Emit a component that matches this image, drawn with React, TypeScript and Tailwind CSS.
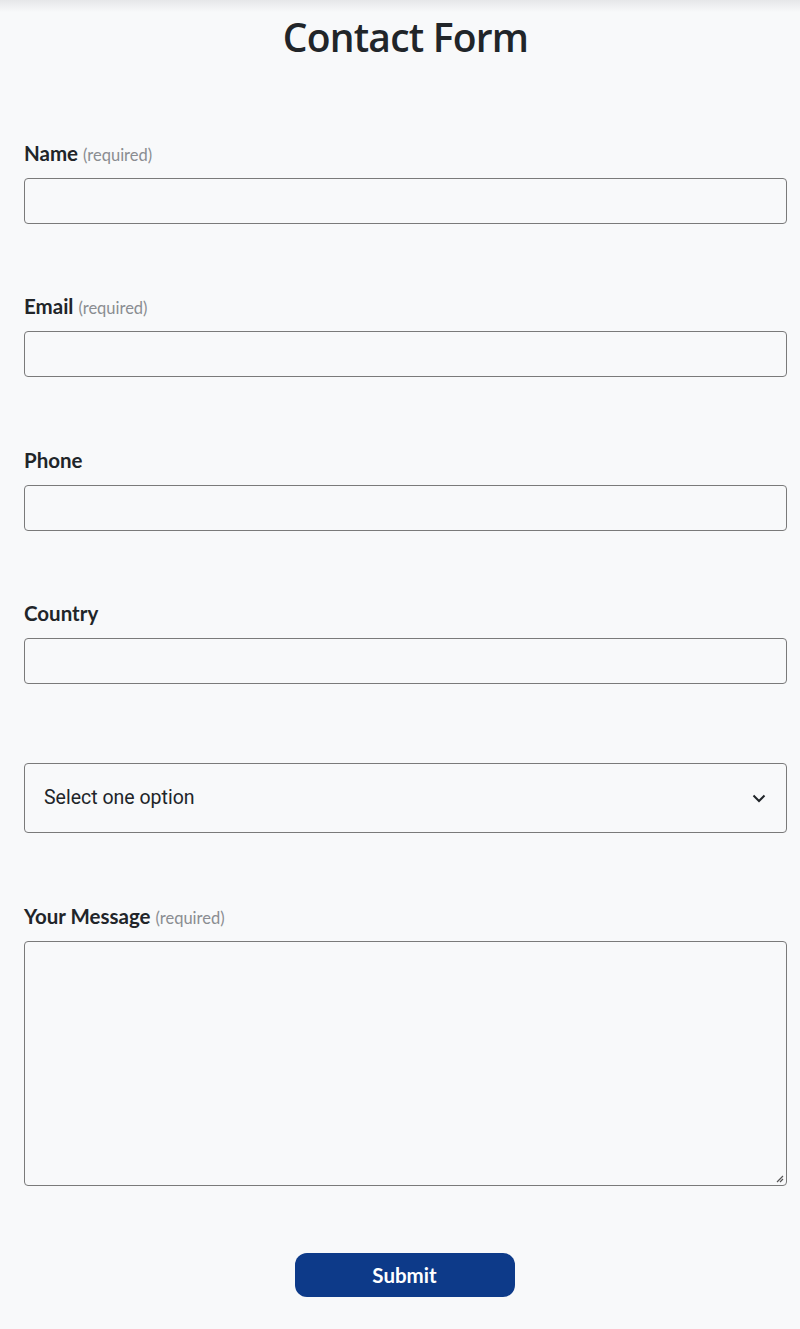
import React from "react";

const labelFont = { fontFamily: "Lato, 'Noto Sans', sans-serif" };

function Label({ text, required }: { text: string; required?: boolean }) {
  return (
    <div className="h-[24px] flex items-baseline text-[20.5px] font-bold text-[#212529] leading-[24px]">
      <span>{text}</span>
      {required && <span className="ml-[5px] text-[16.5px] font-normal text-[#8a8d91]">(required)</span>}
    </div>
  );
}

function Field({ text, required }: { text: string; required?: boolean }) {
  return (
    <div className="flex flex-col">
      <Label text={text} required={required} />
      <div className="mt-[13px] h-[46px] w-full rounded-[4px] border border-[#7a7a7a] bg-[#f8f9fa]" />
    </div>
  );
}

export default function App() {
  return (
    <div className="min-h-[1329px] w-[800px] bg-[#f8f9fa] relative" style={labelFont}>
      <div className="absolute left-0 top-0 h-[12px] w-full bg-gradient-to-b from-[#e6e7e9] to-[#f8f9fa]" />
      <div className="relative flex flex-col pl-[24px] pr-[13px]">
        <h1
          className="mt-[12px] text-center text-[39px] font-semibold leading-[50px] text-[#212529] tracking-[-0.8px]"
          style={{ fontFamily: "'Open Sans', 'Noto Sans', sans-serif" }}
        >
          Contact Form
        </h1>
        <div className="mt-[79px] flex flex-col gap-[70.3px]">
          <Field text="Name" required />
          <Field text="Email" required />
          <Field text="Phone" />
          <Field text="Country" />
        </div>
        <div className="mt-[79px] flex h-[70px] items-center justify-between rounded-[4px] border border-[#7a7a7a] bg-[#f8f9fa] pl-[19px] pr-[20px]">
          <span className="text-[19.5px] text-[#212529]" style={{ fontFamily: "Roboto, sans-serif" }}>
            Select one option
          </span>
          <svg width="14" height="10" viewBox="0 0 14 10" fill="none">
            <path d="M1.5 2.5 L7 8 L12.5 2.5" stroke="#212529" strokeWidth="2" />
          </svg>
        </div>
        <div className="mt-[71px] flex flex-col">
          <Label text="Your Message" required />
          <div className="relative mt-[13px] h-[245px] w-full rounded-[4px] border border-[#7a7a7a] bg-[#f8f9fa]">
            <svg className="absolute bottom-[2px] right-[2px]" width="10" height="10" viewBox="0 0 10 10">
              <path d="M9 3 L3 9 M9 6 L6 9" stroke="#555" strokeWidth="1.2" />
            </svg>
          </div>
        </div>
        <div className="mt-[67px] flex justify-center pr-[2px]">
          <button className="h-[44px] w-[220px] rounded-[12px] bg-[#0d3a89] text-[20.5px] font-bold text-white">
            Submit
          </button>
        </div>
      </div>
    </div>
  );
}
